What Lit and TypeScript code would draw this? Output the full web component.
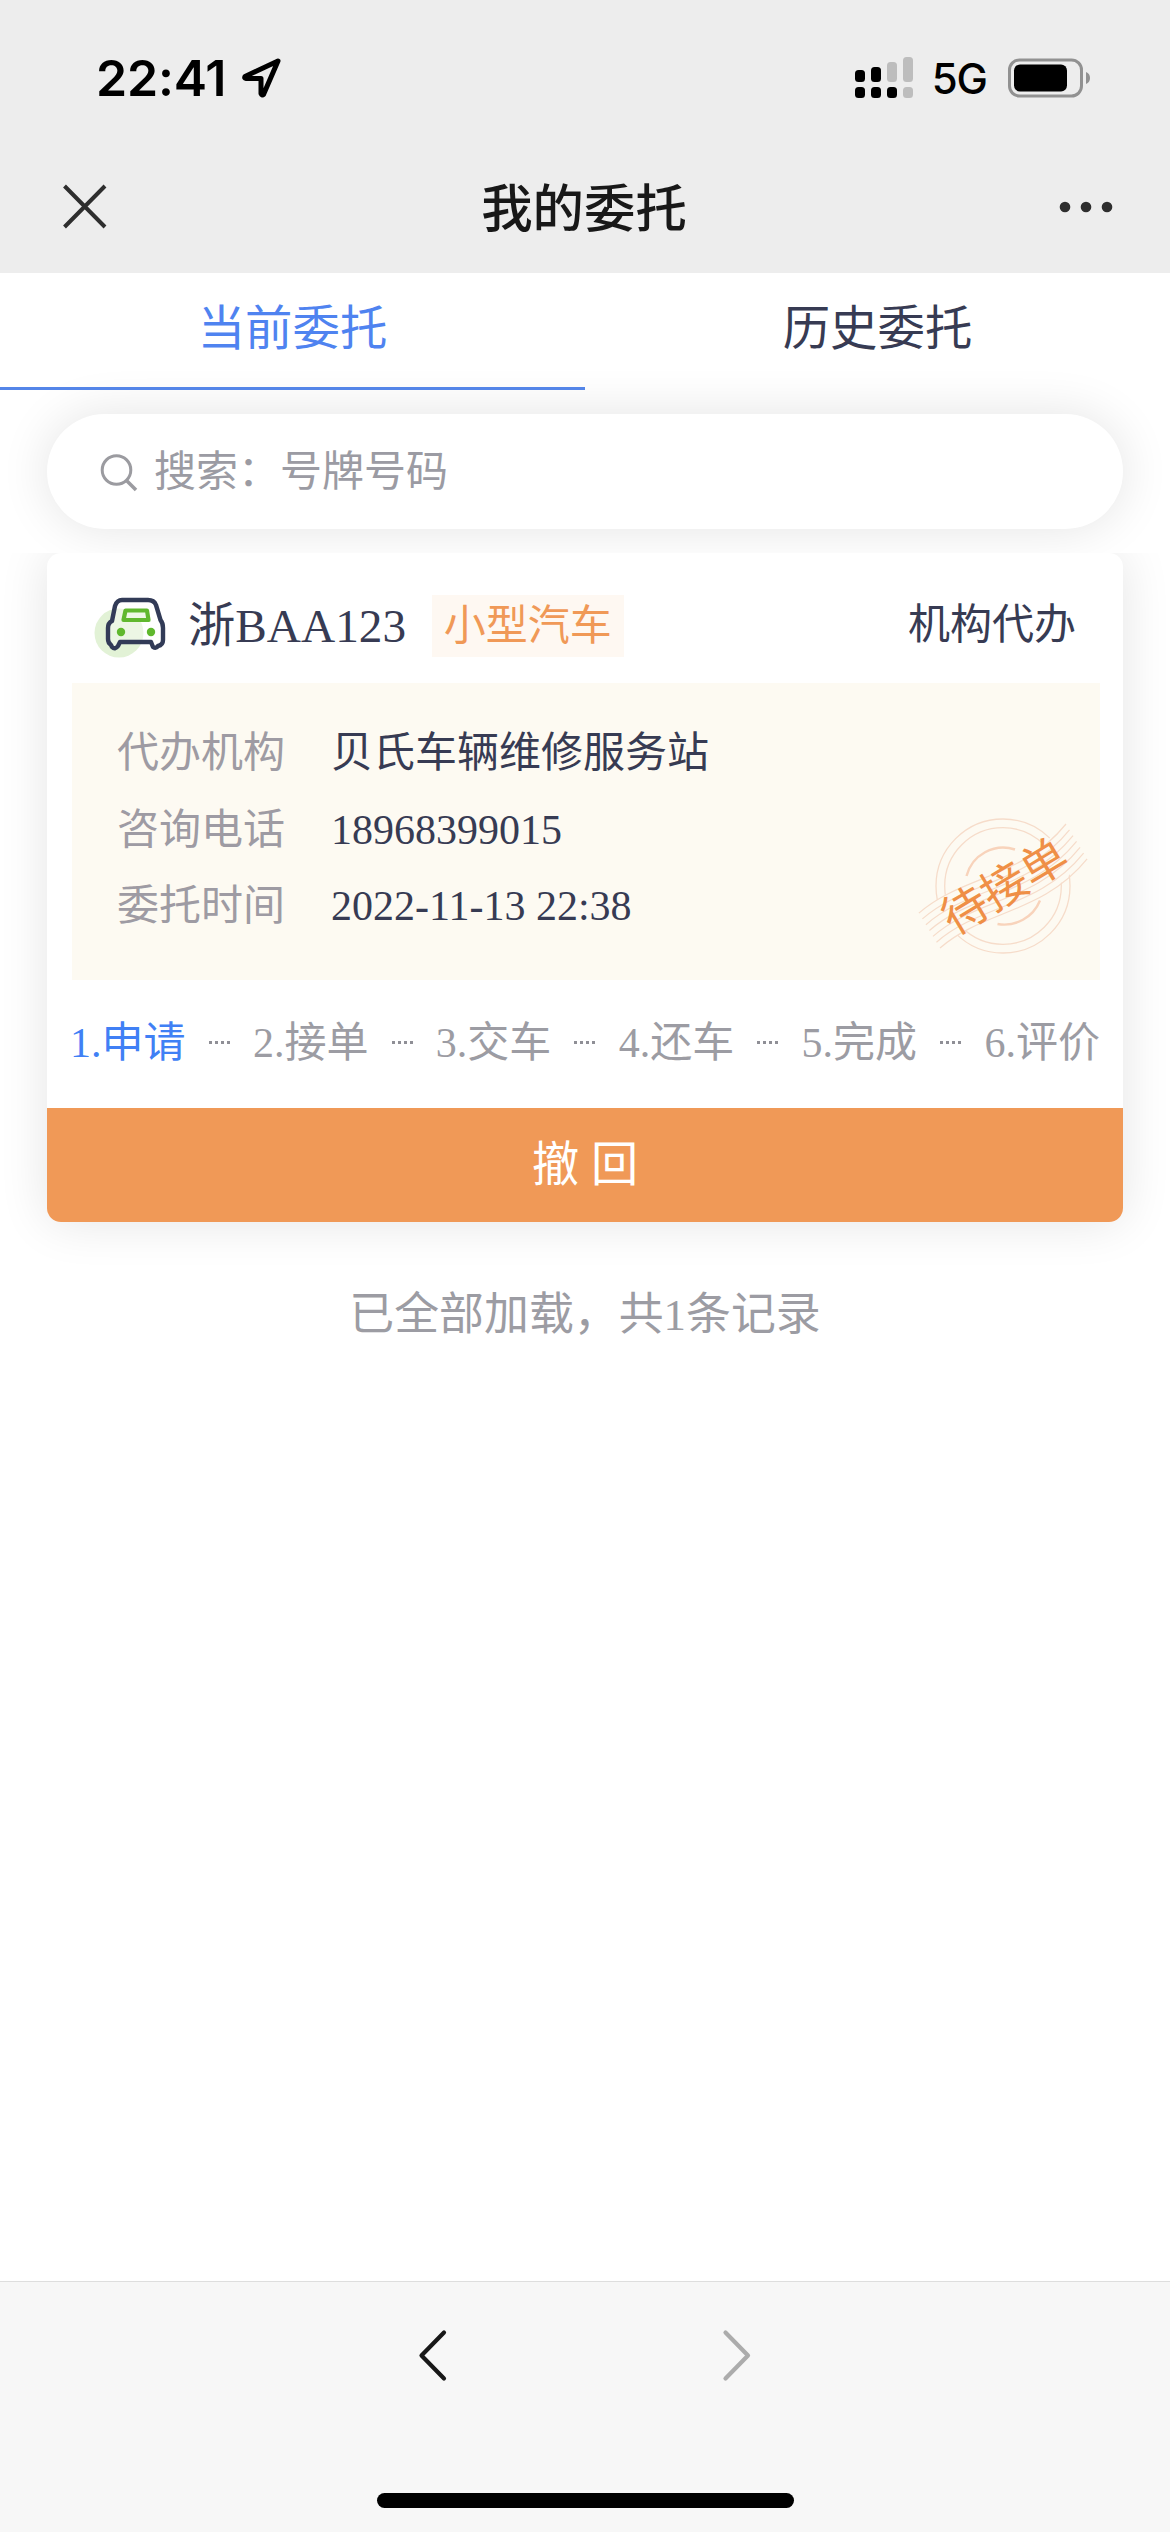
import { LitElement, html, css, svg } from "lit";
import { customElement, property, state } from "lit/decorators.js";
import { classMap } from "lit/directives/class-map.js";

@customElement("status-bar")
class StatusBar extends LitElement {
  static styles = css`
    :host { display: flex; height: 153px; justify-content: space-between; align-items: flex-start; padding: 0 79px 0 96px; box-sizing: border-box; font-family: Inter, "Liberation Sans", sans-serif; color: #000; }
    .side { display: flex; align-items: center; height: 156px; }
    .time { font-size: 50px; font-weight: 600; letter-spacing: -0.2px; }
    .arrow { margin-left: 15px; }
    .net { font-size: 42px; font-weight: 500; margin: 1px 21px 0 19px; letter-spacing: -1px; }
    svg { display: block; }
  `;
  render() {
    const tops = [13, 10, 5, 0];
    return html`
      <div class="side">
        <span class="time">22:41</span>
        <svg class="arrow" width="42" height="42" viewBox="0 0 42 42" fill="none" stroke="#000" stroke-width="5" stroke-linejoin="round" stroke-linecap="round">
          <path d="M37 4 L4 19.5 Q3 21.3 5 21.5 L20 21.5 L20 36.5 Q21 39 22.5 37.5 Z" />
        </svg>
      </div>
      <div class="side">
        <svg width="58" height="42" viewBox="0 0 58 42">
          ${tops.map((t, i) => svg`
            <rect x=${i * 16} y=${t} width="10" height=${25 - t} rx="3.5" fill=${i < 2 ? "#000" : "#bdbdbd"} />
            <rect x=${i * 16} y="30" width="10" height="11" rx="3.5" fill=${i < 3 ? "#000" : "#bdbdbd"} />`)}
        </svg>
        <span class="net">5G</span>
        <svg width="83" height="40" viewBox="0 0 83 40">
          <rect x="1.5" y="2" width="72" height="36" rx="10" fill="none" stroke="#919191" stroke-width="3" />
          <rect x="6" y="6.5" width="53" height="27" rx="6" fill="#000" />
          <path d="M78 14 Q82 15.5 82 20 Q82 24.500 78 26 Z" fill="#919191" />
        </svg>
      </div>
    `;
  }
}

@customElement("nav-header")
class NavHeader extends LitElement {
  @property() heading = "";
  static styles = css`
    :host { display: grid; grid-template-columns: 1fr auto 1fr; align-items: center; height: 120px; padding: 0 57px 12px; box-sizing: border-box; color: #181818; }
    .title { font: 500 51.4px/70px "Noto Sans CJK SC", sans-serif; margin: 0 2px 5px 0; }
    .more { justify-self: end; }
    svg { display: block; }
  `;
  render() {
    return html`
      <svg width="56" height="50" viewBox="0 0 56 50" stroke="#2e2e2e" stroke-width="4" fill="none"><path d="M7.500 4 L48 45 M48 4 L7.500 45" /></svg>
      <div class="title">${this.heading}</div>
      <svg class="more" width="56" height="14" viewBox="0 0 56 14" fill="#2e2e2e"><circle cx="8" cy="7" r="5.300" /><circle cx="29" cy="7" r="5.300" /><circle cx="50" cy="7" r="5.300" /></svg>
    `;
  }
}

@customElement("tab-strip")
class TabStrip extends LitElement {
  @property({ attribute: false }) tabs: string[] = [];
  @state() active = 0;
  static styles = css`
    :host { display: flex; height: 117px; }
    .tab { flex: 1; box-sizing: border-box; border-bottom: 3px solid transparent; text-align: center; font-size: 47.4px; line-height: 112px; color: #373b53; }
    .on { color: #4f83f0; border-color: #5485e8; }
  `;
  render() {
    return this.tabs.map((t, i) => html`<div class=${classMap({ tab: true, on: i === this.active })} @click=${() => (this.active = i)}>${t}</div>`);
  }
}

@customElement("status-stamp")
class StatusStamp extends LitElement {
  @property() label = "";
  static styles = css`
    :host { display: block; width: 180px; height: 150px; }
    svg { display: block; }
    text { font: 46px "Noto Sans CJK SC", sans-serif; }
  `;
  render() {
    const rows = [-3, -2, -1, 0, 1, 2, 3];
    return html`
      <svg width="180" height="150" viewBox="-90 -75 180 150" fill="none">
        <g stroke="#f6dcca">
          <circle r="67" stroke-width="1.3" />
          <circle r="58.300" stroke-width="1.3" />
        </g>
        <path d="M-36.500 -10 A38 38 0 0 1 12 -36.500 M-5.500 38 A38.500 38.500 0 0 0 37 14.500" stroke="#f8d3bb" stroke-width="2.4" />
        <g transform="rotate(-31.2)">
          <path d="M-74 -20.500 C-30 -30.500 20 3.500 74 -20.500 V20.500 C20 44.500 -30 10.500 -74 20.500 Z" fill="#fdfaf2" />
          ${rows.map((r) => svg`<path d=${`M-86 ${r * 6.8} C-30 ${r * 6.8 - 10} 20 ${r * 6.8 + 24} 86 ${r * 6.8}`} stroke="#f6dcca" stroke-width="1.2" />`)}
          <text text-anchor="middle" x="1" y="17.500" fill="#ef8f46">${this.label}</text>
        </g>
      </svg>
    `;
  }
}

interface Order {
  plate: string;
  kind: string;
  mode: string;
  stamp: string;
  fields: [string, string][];
  steps: string[];
  current: number;
}

@customElement("order-card")
class OrderCard extends LitElement {
  @property({ attribute: false }) order!: Order;
  static styles = css`
    :host { display: block; height: 669px; border-radius: 14px; background: #fff; box-shadow: 0 0 50px rgba(0, 0, 0, 0.11); color: #373b53; font-size: 42px; }
    .top { display: flex; align-items: center; height: 130px; padding: 15px 47px 0; box-sizing: border-box; }
    .car { display: block; width: 74px; height: 64px; margin-top: 4px; }
    .plate { font-size: 47.3px; line-height: 60px; margin: 1px 0 0 20px; }
    .kind { margin-left: 26px; padding: 0 11.7px; line-height: 63px; height: 62px; background: #fef8f2; color: #f09957; }
    .mode { margin-left: auto; line-height: 63px; }
    .panel { position: relative; height: 297px; margin: 0 23px 0 25px; padding: 32px 0 0 45px; box-sizing: border-box; background: #fdfaf2; }
    .row { display: flex; height: 76.6px; line-height: 76px; }
    .name { width: 214px; color: #9e9ba3; }
    .stamp { position: absolute; right: 7px; top: 128px; }
    .steps { display: flex; justify-content: space-between; align-items: center; height: 128px; padding: 0 23px 0 23px; color: #9c9ca3; white-space: nowrap; }
    .step { line-height: 60px; margin-top: -3px; }
    .dots { margin-top: -4px; }
    .now { color: #4080f5; }
    .action { display: flex; align-items: center; justify-content: center; height: 114px; border-radius: 0 0 14px 14px; background: #f09957; color: #fff; font-size: 47.2px; }
    .word { line-height: 60px; }
  `;
  render() {
    const o = this.order;
    return html`
      <div class="top">
        <svg class="car" viewBox="0 0 74 64" fill="none" stroke-linejoin="round" stroke-linecap="round">
          <circle cx="25" cy="37" r="24.500" fill="#e2f2d6" />
          <path d="M28 4 H54 Q60 4 62 9 L66.500 24 Q69 27 69 32 V44 Q69 49 64 50 Q62 53 59 51 L57 46 H26 L24 50 Q21 54 18 51 L17 49 Q14 47 14 43 V32 Q14 27 18 25 L21 10 Q23 4 28 4 Z" stroke="#323b57" stroke-width="4.400" fill="#fff" fill-opacity=".35" />
          <path d="M31.500 14.500 H53 L54.500 24 H29.500 Z" stroke="#60b82e" stroke-width="4.200" fill="#eef8e6" />
          <circle cx="27" cy="36" r="4.200" fill="#60b82e" />
          <circle cx="57" cy="36" r="4.200" fill="#60b82e" />
        </svg>
        <span class="plate">${o.plate}</span>
        <span class="kind">${o.kind}</span>
        <span class="mode">${o.mode}</span>
      </div>
      <div class="panel">
        ${o.fields.map(([k, v]) => html`<div class="row"><span class="name">${k}</span><span>${v}</span></div>`)}
        <status-stamp class="stamp" .label=${o.stamp}></status-stamp>
      </div>
      <div class="steps">
        ${o.steps.map((s, i) => html`
          ${i ? html`<svg class="dots" width="21" height="3" viewBox="0 0 21 3"><path d="M0 1.500 H21" stroke="#8f8f96" stroke-width="3" stroke-dasharray="3 3" /></svg>` : ""}
          <span class=${classMap({ step: true, now: i === o.current })}>${i + 1}.${s}</span>`)}
      </div>
      <div class="action"><span class="word">撤 回</span></div>
    `;
  }
}

@customElement("app-root")
export class AppRoot extends LitElement {
  static styles = css`
    :host { display: flex; flex-direction: column; height: 2532px; background: #fff; overflow: hidden; font-family: "Liberation Serif", "Noto Sans CJK SC", serif; }
    .head { background: #ededed; }
    .tabs { position: relative; }
    .find { display: flex; align-items: center; height: 115px; margin: 24px 47px; padding-left: 53px; box-sizing: border-box; border-radius: 58px; background: #fff; box-shadow: 0 0 50px rgba(0, 0, 0, 0.11); font-size: 42px; color: #9b9ba3; }
    .glass { display: block; margin-right: 16px; margin-top: 2px; }
    .hint { line-height: 60px; }
    .list { position: relative; flex: 1; overflow: hidden; background: #fff; padding: 0 47px; }
    .end { margin-top: 61px; text-align: center; font-size: 44.9px; line-height: 64px; color: #9c9ca3; }
    .foot { display: flex; flex-direction: column; align-items: center; justify-content: space-between; height: 251px; padding: 46px 0 24px; box-sizing: border-box; border-top: 1px solid #dedede; background: #f7f7f7; }
    .keys { display: flex; gap: 270px; padding-left: 2px; }
    .bar { width: 417px; height: 15px; border-radius: 8px; background: #000; }
  `;
  private order: Order = {
    plate: "浙BAA123",
    kind: "小型汽车",
    mode: "机构代办",
    stamp: "待接单",
    fields: [
      ["代办机构", "贝氏车辆维修服务站"],
      ["咨询电话", "18968399015"],
      ["委托时间", "2022-11-13 22:38"],
    ],
    steps: ["申请", "接单", "交车", "还车", "完成", "评价"],
    current: 0,
  };
  render() {
    return html`
      <div class="head">
        <status-bar></status-bar>
        <nav-header heading="我的委托"></nav-header>
      </div>
      <tab-strip class="tabs" .tabs=${["当前委托", "历史委托"]}></tab-strip>
      <div class="find">
        <svg class="glass" width="38" height="38" viewBox="0 0 38 38" fill="none" stroke="#9b9ba0" stroke-width="3"><circle cx="16.500" cy="16" r="14.300" /><path d="M26 26 L36 36" stroke-width="3.600" /></svg>
        <span class="hint">搜索：号牌号码</span>
      </div>
      <div class="list">
        <order-card .order=${this.order}></order-card>
        <div class="end">已全部加载，共1条记录</div>
      </div>
      <div class="foot">
        <div class="keys">
          <svg width="35" height="56" viewBox="0 0 35 56" fill="none" stroke="#181818" stroke-width="4.200" stroke-linecap="round" stroke-linejoin="round"><path d="M28 4.500 L5.500 27.500 L28 50.500" /></svg>
          <svg width="35" height="56" viewBox="0 0 35 56" fill="none" stroke="#acacac" stroke-width="4.200" stroke-linecap="round" stroke-linejoin="round"><path d="M4.500 4.500 L27 27.500 L4.500 50.500" /></svg>
        </div>
        <div class="bar"></div>
      </div>
    `;
  }
}
